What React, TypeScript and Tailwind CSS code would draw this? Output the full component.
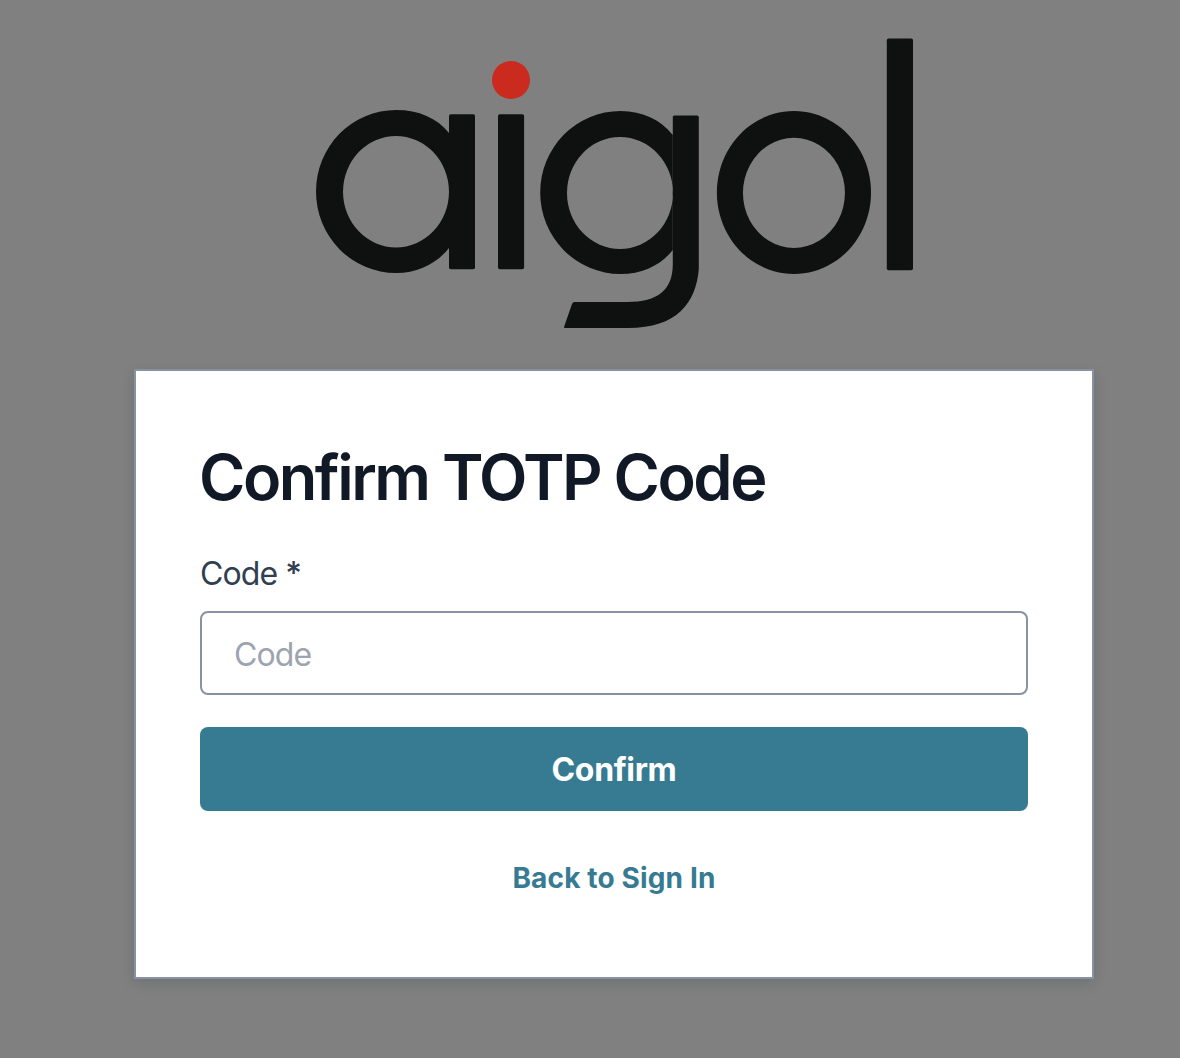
import { useState } from "react";

function AigolLogo() {
  return (
    <svg viewBox="0 0 600 292" className="ml-[315px] mt-[38px] h-[292px] w-[600px]" role="img" aria-label="aigol">
      <g fill="#0f1110" fillRule="evenodd">
        <path d="M81 72A80 81.5 0 0 0 81 235C104 235 122 225 134 210V95C122 80 104 72 81 72ZM81 98A53 55.7 0 0 1 81 209.4A53 55.7 0 0 1 81 98Z" />
        <rect x="134" y="76.3" width="26" height="155" rx="1.8" />
        <rect x="183" y="76.3" width="26.1" height="155" rx="1.8" />
        <path d="M305.5 73A80.3 81.5 0 0 0 305.5 236C328 236 346 227 357.8 212V97C346 82 328 73 305.5 73ZM305 99A53 56 0 0 1 305 211A53 56 0 0 1 305 99Z" />
        <path d="M357.8 79Q357.8 77.5 359.4 77.5H382Q383.8 77.5 383.8 79.3V231C381 265 362 290 313 290H250Q248.7 290 249.2 288.4L257 266Q257.8 264 259.6 264H312C343 264 357.8 252 357.8 226Z" />
        <path d="M478.9 73A77.1 81.5 0 1 0 479 73ZM479 99.8A51 55.1 0 1 1 478.9 99.8Z" />
        <rect x="571.8" y="0.5" width="26.2" height="231.7" rx="1.8" />
      </g>
      <circle cx="196" cy="42" r="19" fill="#ca2b1e" />
    </svg>
  );
}

export default function App() {
  const [code, setCode] = useState("");

  return (
    <main className="min-h-screen overflow-hidden bg-[#808080] font-['Inter',sans-serif] text-[32px] leading-[48px]">
      <AigolLogo />
      <form
        onSubmit={(e) => e.preventDefault()}
        className="ml-[134px] mt-[39px] flex h-[610px] w-[960px] flex-col border-2 border-[#8892a0] bg-white p-16 shadow-[0_4px_12px_rgba(13,26,38,0.15)]"
      >
        <h1 className="-ml-px pt-px text-[63px] font-[560] leading-[82px] tracking-[-2.5px] text-[#111926]">Confirm TOTP Code</h1>
        <label htmlFor="code" className="mt-8 self-start tracking-[-0.9px] text-[#304050]">
          Code <span className="font-medium">*</span>
        </label>
        <input
          id="code"
          name="code"
          value={code}
          onChange={(e) => setCode(e.target.value)}
          autoComplete="one-time-code"
          placeholder="Code"
          className="mt-[13px] h-[84px] w-full rounded-lg border-2 border-[#8892a0] px-8 pt-0.5 tracking-[-0.9px] outline-none placeholder:text-[#9da4b0]"
        />
        <button type="submit" className="mt-8 h-[84px] rounded-lg bg-[#377b92] pt-0.5 font-bold tracking-[-0.35px] text-white">
          Confirm
        </button>
        <button type="button" className="mt-[46px] self-center text-[28px] leading-[42px] font-bold tracking-[0.15px] text-[#377b92]">
          Back to Sign In
        </button>
      </form>
    </main>
  );
}
